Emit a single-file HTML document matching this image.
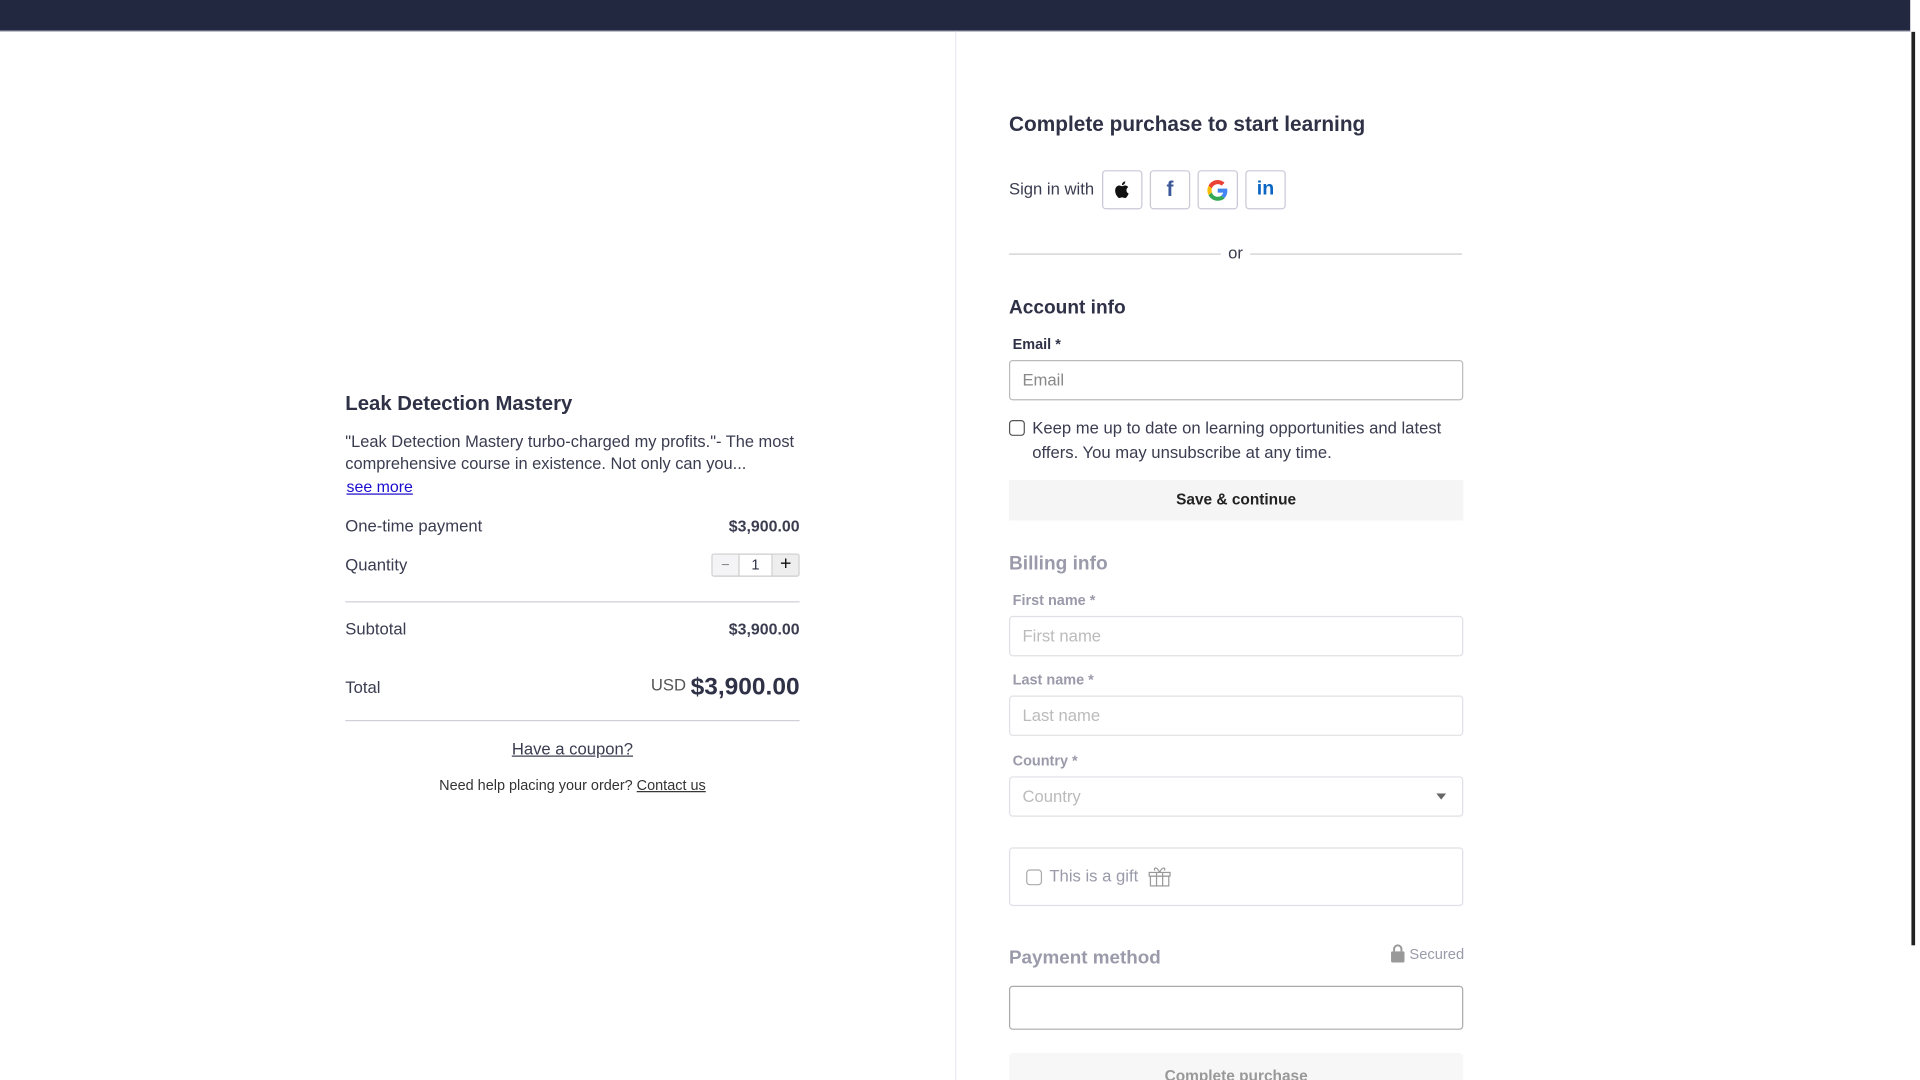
<!DOCTYPE html>
<html><head><meta charset="utf-8"><style>
*{box-sizing:border-box;margin:0;padding:0}
html,body{width:1920px;height:1080px;overflow:hidden;background:#fff}
#w{width:1568px;height:882px;transform:scale(1.22449);transform-origin:0 0;position:relative;font-family:"Liberation Sans",sans-serif;color:#2f3146}
.a{position:absolute}
.top{left:0;top:0;width:1560px;height:26px;background:#222840;border-bottom:1px solid #d0d0d8}
.sb{left:1561px;top:26px;width:3px;height:746px;background:#222}
.div{left:780px;top:26px;width:1px;height:856px;background:#ececf0}
.t{font-size:13.6px;color:#3a3c50}
.in{border:1px solid #c9c9d3;border-radius:3px;background:#fff;font-size:13.6px;color:#888;padding-left:10px;display:flex;align-items:center}
.lbl{font-size:11.8px;font-weight:bold}
.ic{width:33px;height:32px;border:1px solid #c9c9d6;border-radius:3px;top:139px;display:flex;align-items:center;justify-content:center}
.g{color:#9a9aaa}
</style></head><body><div id="w">
<div class="a top"></div><div class="a sb"></div><div class="a div"></div>

<div class="a" style="left:282px;top:320px;font-size:16.6px;font-weight:bold">Leak Detection Mastery</div>
<div class="a t" style="left:282px;top:352px;width:380px;line-height:18px;font-size:13.4px">"Leak Detection Mastery turbo-charged my profits."- The most comprehensive course in existence. Not only can you...</div>
<div class="a" style="left:283px;top:390px;font-size:13px;color:#1a0dcc;text-decoration:underline">see more</div>
<div class="a t" style="left:282px;top:422px">One-time payment</div>
<div class="a t" style="left:560px;top:422px;width:93px;text-align:right;font-weight:bold;font-size:13px">$3,900.00</div>
<div class="a t" style="left:282px;top:454px">Quantity</div>
<div class="a" style="left:581px;top:452px;width:72px;height:19px;border:1px solid #ccc;border-radius:2px;display:flex;font-size:12px">
<div style="width:21px;background:#f4f4f6;text-align:center;color:#888;line-height:17px">−</div>
<div style="width:29px;border-left:1px solid #ccc;border-right:1px solid #ccc;text-align:center;line-height:17px">1</div>
<div style="width:21px;background:#eee;text-align:center;font-size:16px;line-height:16px;color:#111">+</div></div>
<div class="a" style="left:282px;top:491px;width:371px;height:1px;background:#d0d0d8"></div>
<div class="a t" style="left:282px;top:506px">Subtotal</div>
<div class="a t" style="left:560px;top:506px;width:93px;text-align:right;font-weight:bold;font-size:13px">$3,900.00</div>
<div class="a t" style="left:282px;top:554px">Total</div>
<div class="a" style="left:450px;top:550px;width:203px;text-align:right"><span style="font-size:13.6px;color:#555;vertical-align:3px">USD </span><span style="font-size:20px;font-weight:bold"> $3,900.00</span></div>
<div class="a" style="left:282px;top:588px;width:371px;height:1px;background:#d0d0d8"></div>
<div class="a t" style="left:282px;top:604px;width:371px;text-align:center;text-decoration:underline">Have a coupon?</div>
<div class="a" style="left:282px;top:634px;width:371px;text-align:center;font-size:11.8px;color:#333">Need help placing your order? <u>Contact us</u></div>

<div class="a" style="left:824px;top:92px;font-size:17px;font-weight:bold">Complete purchase to start learning</div>
<div class="a t" style="left:824px;top:147px">Sign in with</div>
<div class="a ic" style="left:900px"><svg width="16" height="16" viewBox="0 0 24 24"><path fill="#111" d="M16.4 12.6c0-2.6 2.1-3.8 2.2-3.9-1.2-1.8-3.1-2-3.7-2-1.6-.2-3.1.9-3.9.9-.8 0-2.1-.9-3.4-.9-1.7 0-3.3 1-4.2 2.6-1.8 3.1-.5 7.7 1.3 10.200.9 1.300 1.900 2.700 3.200 2.600 1.300-.1 1.800-.8 3.300-.8 1.600 0 2 .8 3.400.8 1.400 0 2.300-1.300 3.100-2.600 1-1.400 1.400-2.800 1.400-2.900-.1 0-2.700-1-2.700-4M13.900 4.900c.7-.9 1.200-2 1-3.200-1 0-2.200.7-3 1.500-.6.700-1.200 1.900-1 3.100 1.100.1 2.300-.6 3-1.400z"/></svg></div>
<div class="a ic" style="left:939px;color:#3b5998;font-weight:bold;font-size:17px">f</div>
<div class="a ic" style="left:978px"><svg width="17" height="17" viewBox="0 0 48 48"><path fill="#EA4335" d="M24 9.5c3.5 0 6.6 1.2 9 3.5l6.7-6.7C35.6 2.400 30.200 0 24 0 14.600 0 6.600 5.400 2.700 13.300l7.800 6C12.400 13.700 17.700 9.500 24 9.500z"/><path fill="#4285F4" d="M46.100 24.500c0-1.600-.1-3.100-.4-4.500H24v9h12.400c-.5 2.900-2.200 5.300-4.600 7l7.500 5.800c4.400-4 6.800-10 6.800-17.300z"/><path fill="#FBBC05" d="M10.500 28.700c-.5-1.500-.8-3-.8-4.700s.3-3.200.8-4.700l-7.800-6C1 16.600 0 20.200 0 24s1 7.400 2.700 10.700l7.800-6z"/><path fill="#34A853" d="M24 48c6.500 0 11.900-2.100 15.900-5.800l-7.500-5.800c-2.100 1.400-4.800 2.300-8.400 2.300-6.300 0-11.600-4.200-13.500-9.900l-7.800 6C6.600 42.600 14.600 48 24 48z"/></svg></div>
<div class="a ic" style="left:1017px;color:#0a66c2;font-weight:bold;font-size:16px">in</div>
<div class="a" style="left:824px;top:207px;width:173px;height:1px;background:#ccc"></div>
<div class="a" style="left:1021px;top:207px;width:173px;height:1px;background:#ccc"></div>
<div class="a t" style="left:997px;top:199px;width:24px;text-align:center">or</div>

<div class="a" style="left:824px;top:243px;font-size:15.6px;font-weight:bold">Account info</div>
<div class="a lbl" style="left:827px;top:274px">Email *</div>
<div class="a in" style="left:824px;top:294px;width:371px;height:33px;border-color:#bbb">Email</div>
<div class="a" style="left:824px;top:343px;width:13px;height:13px;border:1px solid #555;border-radius:3px"></div>
<div class="a t" style="left:843px;top:340px;width:350px;line-height:20px">Keep me up to date on learning opportunities and latest offers. You may unsubscribe at any time.</div>
<div class="a" style="left:824px;top:392px;width:371px;height:33px;background:#f5f5f6;font-size:12.6px;font-weight:bold;text-align:center;line-height:33px;color:#222">Save &amp; continue</div>

<div class="a g" style="left:824px;top:452px;font-size:15.6px;font-weight:bold">Billing info</div>
<div class="a lbl g" style="left:827px;top:483px">First name *</div>
<div class="a in" style="left:824px;top:503px;width:371px;height:33px;border-color:#e0e0e6;color:#bbb">First name</div>
<div class="a lbl g" style="left:827px;top:548px">Last name *</div>
<div class="a in" style="left:824px;top:568px;width:371px;height:33px;border-color:#e0e0e6;color:#bbb">Last name</div>
<div class="a lbl g" style="left:827px;top:614px">Country *</div>
<div class="a in" style="left:824px;top:634px;width:371px;height:33px;border-color:#e0e0e6;color:#bbb">Country</div>
<div class="a" style="left:1173px;top:648px;width:0;height:0;border-left:4px solid transparent;border-right:4px solid transparent;border-top:5px solid #666"></div>
<div class="a" style="left:824px;top:692px;width:371px;height:48px;border:1px solid #e0e0e6;border-radius:3px"></div>
<div class="a" style="left:838px;top:710px;width:13px;height:13px;border:1px solid #aaa;border-radius:3px"></div>
<div class="a g" style="left:857px;top:708px;font-size:13.6px">This is a gift</div>
<svg class="a" style="left:937px;top:707px" width="20" height="17" viewBox="0 0 20 17" fill="none" stroke="#999"><rect x="1.5" y="5.5" width="17" height="3"/><rect x="2.5" y="8.5" width="15" height="8"/><path d="M7.500 5.500v11M12.500 5.500v11M10 5.500C8 1 5 1 6 4M10 5.500C12 1 15 1 14 4"/></svg>
<div class="a g" style="left:824px;top:774px;font-size:15.4px;font-weight:bold">Payment method</div>
<svg class="a" style="left:1136px;top:771px" width="11" height="15" viewBox="0 0 11 15"><path d="M2.500 6V4a3 3 0 0 1 6 0v2" stroke="#999" stroke-width="1.6" fill="none"/><rect x="0" y="6" width="11" height="9" rx="1" fill="#999"/></svg>
<div class="a g" style="left:1151px;top:772px;font-size:12px">Secured</div>
<div class="a" style="left:824px;top:805px;width:371px;height:36px;border:1px solid #aaa;border-radius:3px"></div>
<div class="a" style="left:824px;top:860px;width:371px;height:30px;background:#f7f7f8;border-radius:3px;font-size:12.6px;font-weight:bold;color:#999;text-align:center;padding-top:12px">Complete purchase</div>
</div></body></html>
